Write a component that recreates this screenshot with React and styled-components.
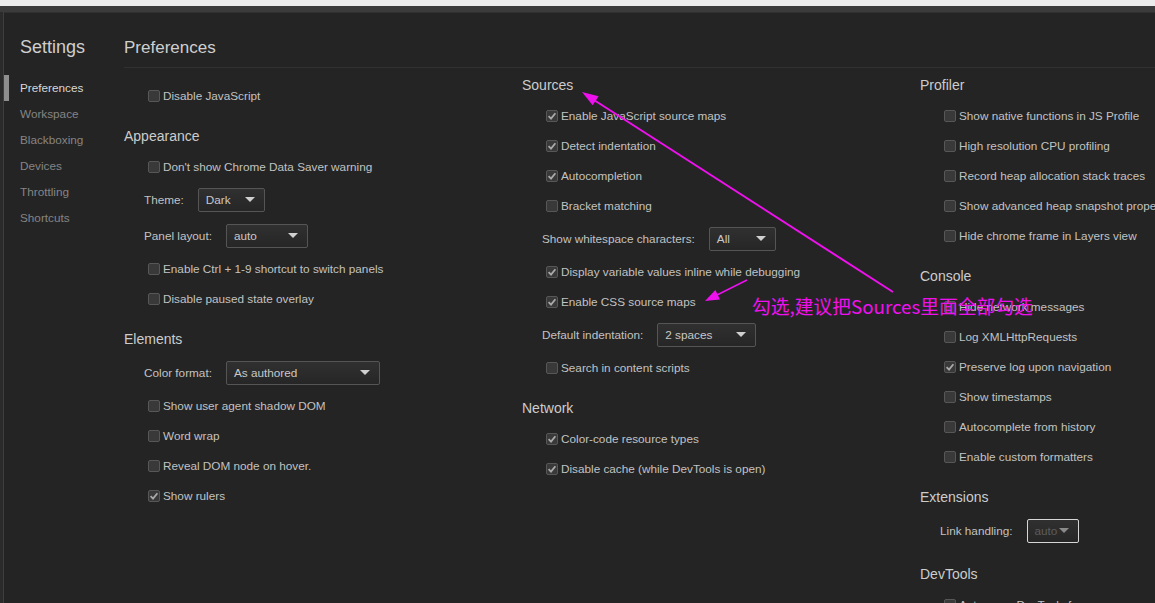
import React from 'react';
import styled, { createGlobalStyle } from 'styled-components';

const GlobalStyle = createGlobalStyle`
  html, body {
    margin: 0;
    padding: 0;
    overflow: hidden;
    background: #ececec;
  }
  body {
    font-family: "Liberation Sans", Arial, sans-serif;
  }
`;

const Screen = styled.div`
  position: relative;
  height: 603px;
  padding-top: 6px;
  box-sizing: border-box;
  background: #ececec;
  overflow: hidden;
`;

const Frame = styled.div`
  height: 100%;
  padding-top: 6px;
  box-sizing: border-box;
  background: #3b3b3b;
  display: flex;
`;

const EdgeStrip = styled.div`
  width: 4px;
  flex-shrink: 0;
  background: #2b2b2b;
  border-right: 1px solid #3e3e3e;
  box-sizing: border-box;
`;

const Dialog = styled.div`
  flex: 1;
  min-width: 0;
  display: flex;
  background: #242424;
  border-top: 1px solid #303030;
`;

const Sidebar = styled.nav`
  width: 120px;
  flex-shrink: 0;
  padding-top: 22px;
`;

const SidebarTitle = styled.div`
  font-size: 18px;
  line-height: 24px;
  color: #cfcfcf;
  padding-left: 16px;
  margin-bottom: 16px;
`;

const NavItem = styled.div`
  font-size: 11.75px;
  line-height: 26px;
  padding-left: 11px;
  color: ${(p) => (p.$active ? '#d8d8d8' : '#858585')};
  border-left: 5px solid ${(p) => (p.$active ? '#8e8e8e' : 'transparent')};
`;

const Main = styled.main`
  flex: 1;
  min-width: 0;
  padding-top: 23px;
`;

const Header = styled.h1`
  margin: 0;
  font-weight: normal;
  font-size: 17px;
  line-height: 24px;
  color: #cfcfcf;
  padding-bottom: 7px;
  border-bottom: 1px solid #313131;
`;

const Columns = styled.div`
  display: flex;
  padding-top: 2px;
`;

const Column = styled.div`
  width: 398px;
  flex-shrink: 0;
`;

const Section = styled.section`
  margin-bottom: 11px;
  padding-top: ${(p) => (p.$untitled ? '10px' : '0')};
`;

const SectionTitle = styled.h2`
  margin: 0;
  font-weight: normal;
  font-size: 14px;
  line-height: 30px;
  color: #cccccc;
`;

const CheckRow = styled.label`
  display: flex;
  align-items: center;
  height: 30px;
  box-sizing: border-box;
  padding: 1px 0 0 24px;
  font-size: 11.75px;
  color: #c2c2c2;
  white-space: nowrap;
`;

const Box = styled.span`
  width: 12px;
  height: 12px;
  box-sizing: border-box;
  margin-right: 3px;
  border: 1px solid #575757;
  border-radius: 2px;
  background: #393939;
  display: flex;
  align-items: center;
  justify-content: center;
  flex-shrink: 0;
`;

const SelectRow = styled.div`
  display: flex;
  align-items: center;
  height: 36px;
  box-sizing: border-box;
  padding: 1px 0 0 20px;
  gap: 14px;
  font-size: 11.75px;
  color: #c2c2c2;
  white-space: nowrap;
`;

const Select = styled.div`
  width: ${(p) => p.$width}px;
  height: 24px;
  box-sizing: border-box;
  padding: 0 9px 0 7px;
  display: flex;
  align-items: center;
  justify-content: space-between;
  border: 1px solid ${(p) => (p.$disabled ? '#d6d6d6' : '#555555')};
  border-radius: 2px;
  background: linear-gradient(#303030, #262626);
  color: ${(p) => (p.$disabled ? '#5c5c5c' : '#c8c8c8')};
  font-size: 11.75px;
`;

const Caret = styled.span`
  width: 0;
  height: 0;
  border-left: 5px solid transparent;
  border-right: 5px solid transparent;
  border-top: 5px solid ${(p) => (p.$disabled ? '#8a8a8a' : '#d0d0d0')};
`;

const Overlay = styled.svg`
  position: absolute;
  left: 0;
  top: 0;
  pointer-events: none;
`;

const Note = styled.div`
  position: absolute;
  left: 752px;
  top: 293px;
  font-family: "Noto Sans CJK SC", "Liberation Sans", sans-serif;
  font-size: 18.75px;
  line-height: 26px;
  color: #ee11ee;
  white-space: nowrap;
`;

const Checkbox = ({ checked, children }) => (
  <CheckRow>
    <Box>
      {checked && (
        <svg width="10" height="10" viewBox="0 0 10 10">
          <path d="M1.6 5.2 L4 7.6 L8.4 2.2" fill="none" stroke="#a9a9a9" strokeWidth="1.8" />
        </svg>
      )}
    </Box>
    {children}
  </CheckRow>
);

const Dropdown = ({ label, value, width, disabled }) => (
  <SelectRow>
    <span>{label}</span>
    <Select $width={width} $disabled={disabled}>
      <span>{value}</span>
      <Caret $disabled={disabled} />
    </Select>
  </SelectRow>
);

const navItems = ['Preferences', 'Workspace', 'Blackboxing', 'Devices', 'Throttling', 'Shortcuts'];

export default function App() {
  return (
    <Screen>
      <GlobalStyle />
      <Frame>
        <EdgeStrip />
        <Dialog>
          <Sidebar>
            <SidebarTitle>Settings</SidebarTitle>
            {navItems.map((item, i) => (
              <NavItem key={item} $active={i === 0}>{item}</NavItem>
            ))}
          </Sidebar>
          <Main>
            <Header>Preferences</Header>
            <Columns>
              <Column>
                <Section $untitled>
                  <Checkbox>Disable JavaScript</Checkbox>
                </Section>
                <Section>
                  <SectionTitle>Appearance</SectionTitle>
                  <Checkbox>Don't show Chrome Data Saver warning</Checkbox>
                  <Dropdown label="Theme:" value="Dark" width={67} />
                  <Dropdown label="Panel layout:" value="auto" width={82} />
                  <Checkbox>Enable Ctrl + 1-9 shortcut to switch panels</Checkbox>
                  <Checkbox>Disable paused state overlay</Checkbox>
                </Section>
                <Section>
                  <SectionTitle>Elements</SectionTitle>
                  <Dropdown label="Color format:" value="As authored" width={154} />
                  <Checkbox>Show user agent shadow DOM</Checkbox>
                  <Checkbox>Word wrap</Checkbox>
                  <Checkbox>Reveal DOM node on hover.</Checkbox>
                  <Checkbox checked>Show rulers</Checkbox>
                </Section>
              </Column>
              <Column>
                <Section>
                  <SectionTitle>Sources</SectionTitle>
                  <Checkbox checked>Enable JavaScript source maps</Checkbox>
                  <Checkbox checked>Detect indentation</Checkbox>
                  <Checkbox checked>Autocompletion</Checkbox>
                  <Checkbox>Bracket matching</Checkbox>
                  <Dropdown label="Show whitespace characters:" value="All" width={67} />
                  <Checkbox checked>Display variable values inline while debugging</Checkbox>
                  <Checkbox checked>Enable CSS source maps</Checkbox>
                  <Dropdown label="Default indentation:" value="2 spaces" width={99} />
                  <Checkbox>Search in content scripts</Checkbox>
                </Section>
                <Section>
                  <SectionTitle>Network</SectionTitle>
                  <Checkbox checked>Color-code resource types</Checkbox>
                  <Checkbox checked>Disable cache (while DevTools is open)</Checkbox>
                </Section>
              </Column>
              <Column>
                <Section>
                  <SectionTitle>Profiler</SectionTitle>
                  <Checkbox>Show native functions in JS Profile</Checkbox>
                  <Checkbox>High resolution CPU profiling</Checkbox>
                  <Checkbox>Record heap allocation stack traces</Checkbox>
                  <Checkbox>Show advanced heap snapshot properties</Checkbox>
                  <Checkbox>Hide chrome frame in Layers view</Checkbox>
                </Section>
                <Section>
                  <SectionTitle>Console</SectionTitle>
                  <Checkbox>Hide network messages</Checkbox>
                  <Checkbox>Log XMLHttpRequests</Checkbox>
                  <Checkbox checked>Preserve log upon navigation</Checkbox>
                  <Checkbox>Show timestamps</Checkbox>
                  <Checkbox>Autocomplete from history</Checkbox>
                  <Checkbox>Enable custom formatters</Checkbox>
                </Section>
                <Section>
                  <SectionTitle>Extensions</SectionTitle>
                  <Dropdown label="Link handling:" value="auto" width={52} disabled />
                </Section>
                <Section>
                  <SectionTitle>DevTools</SectionTitle>
                  <Checkbox>Auto-open DevTools for popups</Checkbox>
                </Section>
              </Column>
            </Columns>
          </Main>
        </Dialog>
      </Frame>
      <Overlay width="1155" height="603" viewBox="0 0 1155 603">
        <line x1="893" y1="292" x2="594" y2="100" stroke="#ee11ee" strokeWidth="2" />
        <polygon points="582,92 598.6,96.3 592.6,105.2" fill="#ee11ee" />
        <line x1="747" y1="280" x2="716" y2="295.5" stroke="#ee11ee" strokeWidth="1.5" />
        <polygon points="705,301 720,299.6 715.4,290" fill="#ee11ee" />
      </Overlay>
      <Note>勾选,建议把Sources里面全部勾选</Note>
    </Screen>
  );
}
